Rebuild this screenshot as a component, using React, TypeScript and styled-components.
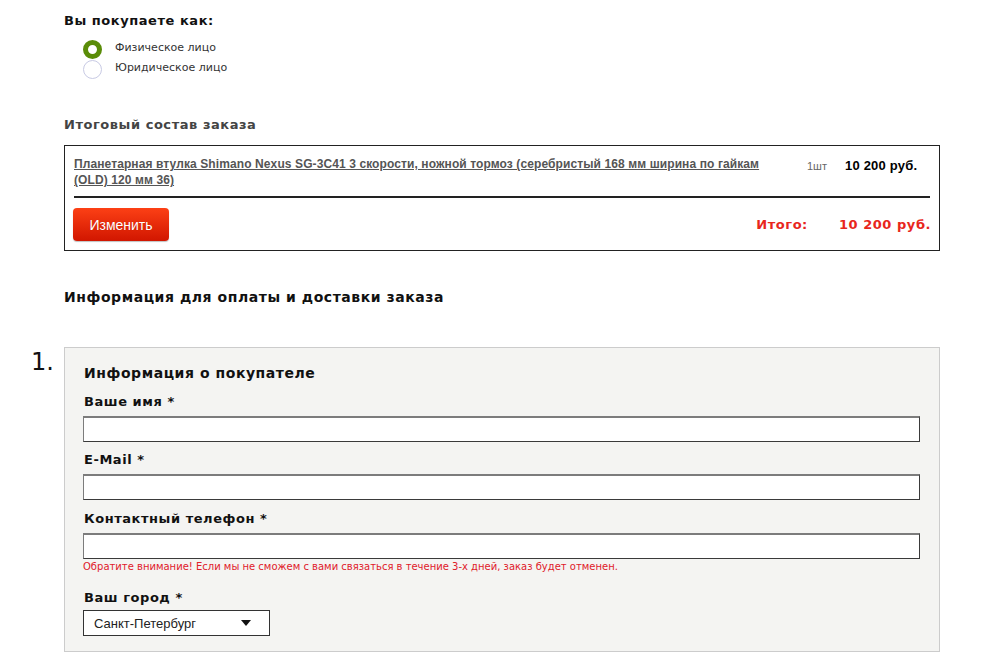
import React from "react";
import styled, { createGlobalStyle } from "styled-components";

const Global = createGlobalStyle`
  html, body { margin: 0; padding: 0; background: #fff; }
  body { font-family: "DejaVu Sans", Verdana, sans-serif; color: #111; }
  * { box-sizing: border-box; }
`;

const Page = styled.div`
  width: 1000px;
  padding: 13px 0 0 64px;
`;

const Content = styled.div`
  width: 876px;
  display: flex;
  flex-direction: column;
`;

const Title = styled.div<{ $color?: string; $size?: number; $mt?: number }>`
  font-weight: bold;
  font-size: ${(p) => p.$size ?? 13}px;
  letter-spacing: 0.55px;
  line-height: 16px;
  color: ${(p) => p.$color ?? "#111"};
  margin-top: ${(p) => p.$mt ?? 0}px;
`;

const RadioGroup = styled.div`
  display: flex;
  flex-direction: column;
  margin-top: 8px;
  padding-left: 19px;
`;

const RadioRow = styled.label`
  display: flex;
  align-items: center;
  height: 20px;
  gap: 13px;
  font-size: 11px;
  color: #333;
`;

const RadioDot = styled.span<{ $checked?: boolean }>`
  width: 19px;
  height: 19px;
  border-radius: 50%;
  background: #fff;
  border: ${(p) => (p.$checked ? "5px solid #5a8c08" : "1.5px solid #c8cae4")};
  margin-top: 4px;
`;

const OrderBox = styled.div`
  margin-top: 12px;
  border: 1px solid #222;
  padding: 10px 9px 9px 9px;
  display: flex;
  flex-direction: column;
`;

const ProductRow = styled.div`
  display: grid;
  grid-template-columns: 733px 38px 1fr;
  align-items: start;
`;

const ProductLink = styled.a`
  font-family: "Liberation Sans", Arial, sans-serif;
  font-weight: bold;
  font-size: 12px;
  letter-spacing: 0.1px;
  line-height: 16px;
  color: #555;
  text-decoration: underline;
  padding-right: 40px;
`;

const Qty = styled.span`
  font-family: "Liberation Sans", Arial, sans-serif;
  font-size: 11px;
  color: #666;
  line-height: 16px;
  padding-top: 2px;
`;

const Price = styled.span`
  font-family: "Liberation Sans", Arial, sans-serif;
  font-weight: bold;
  font-size: 13px;
  letter-spacing: 0.2px;
  line-height: 16px;
  color: #000;
  padding-top: 2px;
`;

const Separator = styled.div`
  height: 2px;
  background: #222;
  margin: 8px 0 10px;
`;

const TotalRow = styled.div`
  display: flex;
  align-items: center;
  justify-content: space-between;
`;

const RedButton = styled.button`
  margin-left: -1px;
  width: 96px;
  height: 33px;
  border: none;
  border-radius: 4px;
  background: linear-gradient(#fc4015, #d11600);
  color: #fff;
  font-family: "Liberation Sans", Arial, sans-serif;
  font-size: 14px;
  box-shadow: 0 1px 1px rgba(0, 0, 0, 0.25);
  text-shadow: 0 0 1px rgba(120, 0, 0, 0.3);
`;

const Totals = styled.div`
  display: flex;
  gap: 31px;
  font-weight: bold;
  font-size: 13px;
  letter-spacing: 0.55px;
  color: #e8261c;
  margin-right: -1px;
`;

const Numbered = styled.div`
  display: flex;
  margin-top: 42px;
  margin-left: -33px;
`;

const Marker = styled.div`
  width: 33px;
  font-size: 24px;
  line-height: 30px;
  color: #111;
`;

const Panel = styled.div`
  flex: 1;
  background: #f4f4f2;
  border: 1px solid #cccccc;
  padding: 16px 18px 15px 18px;
  display: flex;
  flex-direction: column;
`;

const PanelTitle = styled.div`
  font-weight: bold;
  font-size: 14px;
  letter-spacing: 0.55px;
  line-height: 18px;
  padding-left: 1px;
  margin-bottom: 12px;
`;

const Field = styled.div<{ $mt?: number }>`
  display: flex;
  flex-direction: column;
  margin-top: ${(p) => p.$mt ?? 0}px;
`;

const Label = styled.div<{ $mb?: number }>`
  font-weight: bold;
  font-size: 13px;
  letter-spacing: 0.55px;
  line-height: 16px;
  padding-left: 1px;
  margin-bottom: ${(p) => p.$mb ?? 6}px;
`;

const TextInput = styled.input`
  width: 837px;
  height: 26px;
  background: #fff;
  border: 1px solid;
  border-color: #7c7c7c #3a3a3a #3a3a3a #7c7c7c;
  border-top-width: 2px;
  outline: none;
`;

const Note = styled.div`
  font-size: 10px;
  line-height: 12px;
  color: #e0202a;
  margin-top: 2px;
`;

const SelectBox = styled.div`
  width: 187px;
  height: 26px;
  border: 1px solid #333;
  background: #fff;
  display: flex;
  align-items: center;
  justify-content: space-between;
  padding: 0 18px 0 10px;
  font-family: "Liberation Sans", Arial, sans-serif;
  font-size: 13px;
  color: #222;
`;

export default function App() {
  return (
    <>
      <Global />
      <Page>
        <Content>
          <Title>Вы покупаете как:</Title>
          <RadioGroup>
            <RadioRow>
              <RadioDot $checked />
              Физическое лицо
            </RadioRow>
            <RadioRow>
              <RadioDot />
              Юридическое лицо
            </RadioRow>
          </RadioGroup>

          <Title $color="#444" $mt={40}>Итоговый состав заказа</Title>

          <OrderBox>
            <ProductRow>
              <ProductLink href="#">
                Планетарная втулка Shimano Nexus SG-3C41 3 скорости, ножной тормоз (серебристый 168 мм ширина по гайкам (OLD) 120 мм 36)
              </ProductLink>
              <Qty>1шт</Qty>
              <Price>10 200 руб.</Price>
            </ProductRow>
            <Separator />
            <TotalRow>
              <RedButton>Изменить</RedButton>
              <Totals>
                <span>Итого:</span>
                <span>10 200 руб.</span>
              </Totals>
            </TotalRow>
          </OrderBox>

          <Title $size={14} $mt={38}>Информация для оплаты и доставки заказа</Title>

          <Numbered>
            <Marker>1.</Marker>
            <Panel>
              <PanelTitle>Информация о покупателе</PanelTitle>
              <Field>
                <Label>Ваше имя *</Label>
                <TextInput />
              </Field>
              <Field $mt={10}>
                <Label>E-Mail *</Label>
                <TextInput />
              </Field>
              <Field $mt={11}>
                <Label>Контактный телефон *</Label>
                <TextInput />
                <Note>Обратите внимание! Если мы не сможем с вами связаться в течение 3-х дней, заказ будет отменен.</Note>
              </Field>
              <Field $mt={17}>
                <Label $mb={4}>Ваш город *</Label>
                <SelectBox>
                  <span>Санкт-Петербург</span>
                  <svg width="10" height="6" viewBox="0 0 10 6">
                    <path d="M0 0 H10 L5 6 Z" fill="#111" />
                  </svg>
                </SelectBox>
              </Field>
            </Panel>
          </Numbered>
        </Content>
      </Page>
    </>
  );
}
